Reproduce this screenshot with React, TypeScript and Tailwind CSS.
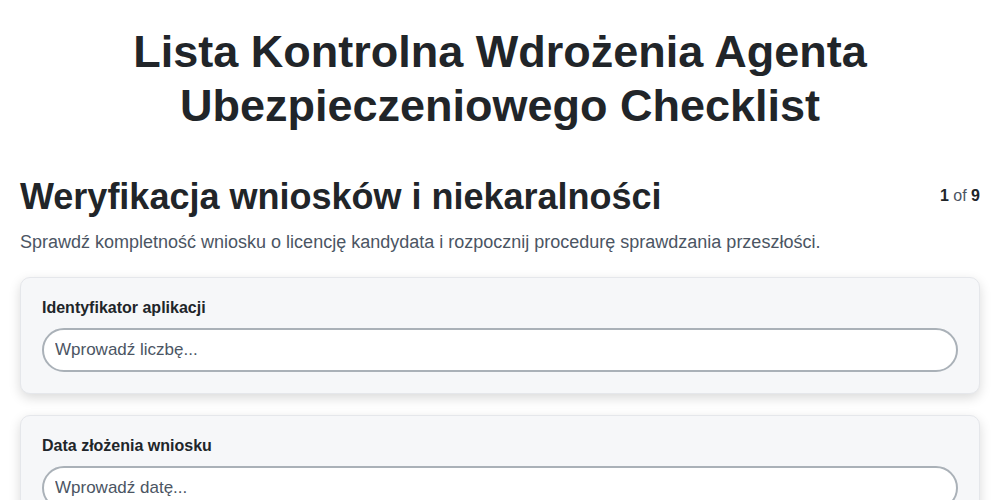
const steps = [
  { label: "Identyfikator aplikacji", placeholder: "Wprowadź liczbę...", type: "number" },
  { label: "Data złożenia wniosku", placeholder: "Wprowadź datę...", type: "text" },
];

export default function App() {
  return (
    <main className="min-h-screen bg-white px-5 text-[#212529] font-['Liberation_Sans',Arial,sans-serif]">
      <h1 className="mx-auto max-w-[800px] pt-[25px] text-center text-[45px] font-bold leading-[54px]">
        Lista Kontrolna Wdrożenia Agenta Ubezpieczeniowego Checklist
      </h1>

      <section className="mt-[42px]">
        <div className="flex items-start justify-between">
          <h2 className="text-4xl font-bold leading-[1.2]">Weryfikacja wniosków i niekaralności</h2>
          <p className="pt-[9px] text-base text-[#4b5563]">
            <span className="font-bold text-[#212529]">1</span> of{" "}
            <span className="font-bold text-[#212529]">9</span>
          </p>
        </div>
        <p className="mt-[10px] text-lg text-[#4b5563]">
          Sprawdź kompletność wniosku o licencję kandydata i rozpocznij procedurę sprawdzania przeszłości.
        </p>

        <div className="mt-[21px] flex flex-col gap-[21px]">
          {steps.map((step) => (
            <div
              key={step.label}
              className="rounded-[10px] border border-[#e5e7eb] bg-[#f6f7f9] px-[21px] pb-[21px] pt-[20px] shadow-[0_4px_12px_rgba(0,0,0,0.15)]"
            >
              <label className="block">
                <span className="block text-base font-bold leading-[20px]">{step.label}</span>
                <input
                  type={step.type}
                  placeholder={step.placeholder}
                  className="mt-[10px] h-[44px] w-full rounded-full border-2 border-[#aab1b8] bg-white px-[11px] text-[17px] text-[#212529] outline-none placeholder:text-[#4b5563]"
                />
              </label>
            </div>
          ))}
        </div>
      </section>
    </main>
  );
}
